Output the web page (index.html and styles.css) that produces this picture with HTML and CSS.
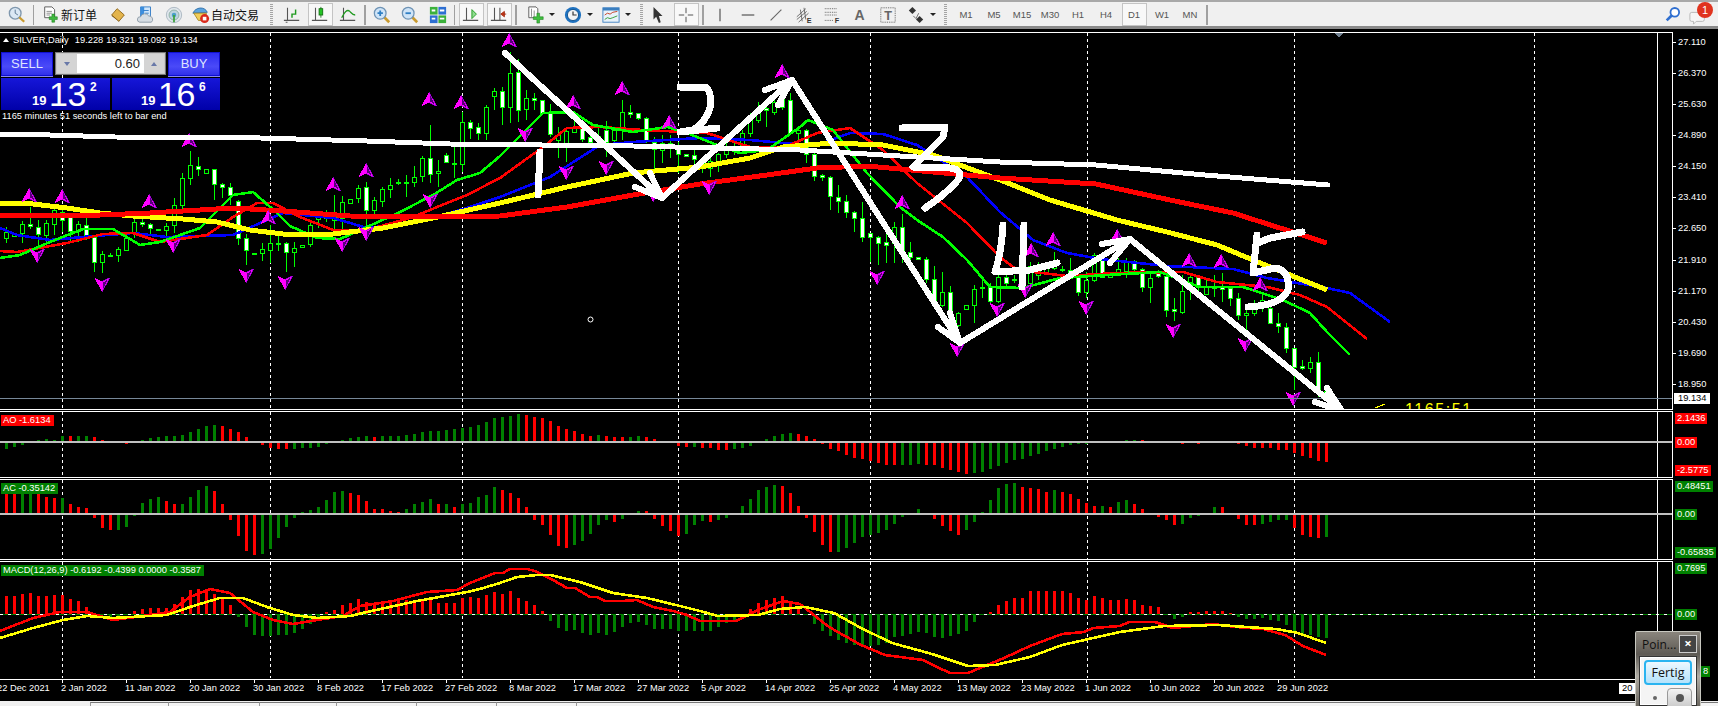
FILE: index.html
```html
<!DOCTYPE html>
<html lang="zh-CN">
<head>
    <meta charset="UTF-8">
    <title>SILVER,Daily</title>
    <link rel="stylesheet" href="styles.css">
</head>
<body>
<div class="terminal">
    <!-- toolbar -->
    <div class="toolbar">
        <div class="group group-a">
            <span class="btn"><svg class="ico" viewBox="0 0 20 20"><circle cx="8" cy="8" r="6.5" fill="#dbe8f4" stroke="#7f97ad" stroke-width="1.5"/><path d="M8 4v4l3 2" fill="none" stroke="#52708c"/><path d="M12.5 12.5l5.5 5" stroke="#c99a2e" stroke-width="2.6"/></svg></span>
            <i class="sep"></i>
            <span class="btn btn-text order"><svg class="ico" viewBox="0 0 20 20"><path d="M3 1h8l3 3v9H3z" fill="#fff" stroke="#555"/><path d="M5 6h6M5 8h6M5 10h4" stroke="#888"/><path d="M11 9h3v3h3v3h-3v3h-3v-3H8v-3h3z" fill="#3fb83f" stroke="#1c7a1c" stroke-width=".6"/></svg>新订单</span>
            <span class="btn"><svg class="ico" viewBox="0 0 20 20"><path d="M9 3l8 7-6 7-8-7z" fill="#e3b44c" stroke="#8d6416"/><path d="M3 10l8 7 1 1-9-7z" fill="#7a5210"/></svg></span>
            <span class="btn"><svg class="ico" viewBox="0 0 20 20"><path d="M4 1h11v11H4z" fill="#cfe6fb" stroke="#2f79c6"/><path d="M4 1h4v11H4z" fill="#3b8ede"/><path d="M7 5h6M9 8h4" stroke="#2f79c6"/><path d="M3 18a3 3 0 0 1 1-6 5 5 0 0 1 9-1 4 4 0 0 1 3 7z" fill="#d6dde3" stroke="#8a98a5"/></svg></span>
            <span class="btn"><svg class="ico" viewBox="0 0 20 20"><circle cx="10" cy="10" r="8.5" fill="#dfe6ec" stroke="#a9b5bf"/><circle cx="10" cy="10" r="5.5" fill="#bcd4e0" stroke="#8fb0a0"/><circle cx="10" cy="10" r="2.5" fill="#4aa0c8"/><path d="M10 10v8" stroke="#3fa33f" stroke-width="2"/></svg></span>
            <span class="btn btn-text auto"><svg class="ico" viewBox="0 0 20 20"><path d="M1 8c3-7 13-8 16-1z" fill="#5ba3de" stroke="#2c6ea8"/><path d="M2 8l14 0-2 8H7z" fill="#f0cd5a" stroke="#a98a24"/><circle cx="14" cy="14" r="5" fill="#d92a1c"/><rect x="12" y="12" width="4" height="4" fill="#fff"/></svg>自动交易</span>
        </div>
        <div class="group group-b">
            <i class="grip"></i>
            <span class="btn"><svg class="ico" viewBox="0 0 20 20"><path class="axis-ln" d="M5 2v14M1 16h17M3 18h2"/><path d="M10 13V9h4V4" fill="none" stroke="#1f9a1f" stroke-width="1.6"/></svg></span>
            <span class="btn on"><svg class="ico" viewBox="0 0 20 20"><path class="axis-ln" d="M5 2v14M1 16h17"/><path d="M11 1v12" stroke="#1f7a1f"/><rect x="9" y="3" width="4" height="7" fill="#25c425" stroke="#117011"/></svg></span>
            <span class="btn"><svg class="ico" viewBox="0 0 20 20"><path class="axis-ln" d="M5 2v14M1 16h17"/><path d="M3 13c3-6 6-10 9-7 2 2 3 4 6 4" fill="none" stroke="#1f9a1f" stroke-width="1.4"/></svg></span>
            <i class="sep sep-tall"></i>
            <span class="btn"><svg class="ico" viewBox="0 0 20 20"><path d="M12 12l6 6" stroke="#c99a2e" stroke-width="3"/><circle cx="8" cy="8" r="6.5" fill="#cfe4f7" stroke="#6e93b5" stroke-width="1.4"/><path d="M5 8h6M8 5v6" stroke="#2e7fc4" stroke-width="2"/></svg></span>
            <span class="btn"><svg class="ico" viewBox="0 0 20 20"><path d="M12 12l6 6" stroke="#c99a2e" stroke-width="3"/><circle cx="8" cy="8" r="6.5" fill="#cfe4f7" stroke="#6e93b5" stroke-width="1.4"/><path d="M5 8h6" stroke="#2e7fc4" stroke-width="2"/></svg></span>
            <span class="btn"><svg class="ico" viewBox="0 0 20 20"><rect x="1" y="1" width="8.5" height="8.5" fill="#3bb13b"/><rect x="10.5" y="1" width="8.5" height="8.5" fill="#2d6fd2"/><rect x="1" y="10.5" width="8.5" height="8.5" fill="#2d6fd2"/><rect x="10.5" y="10.5" width="8.5" height="8.5" fill="#3bb13b"/><path d="M3 5h4M12 5h5M3 14h4M12 14h5" stroke="#fff" stroke-width="2"/></svg></span>
            <i class="sep sep-tall"></i>
            <span class="btn on"><svg class="ico" viewBox="0 0 20 20"><path class="axis-ln" d="M5 2v14M1 16h17"/><path d="M11 4l5 5-5 5z" fill="#8fdc8f" stroke="#1f9a1f"/></svg></span>
            <span class="btn on"><svg class="ico" viewBox="0 0 20 20"><path class="axis-ln" d="M5 2v14M11 2v14M1 16h17"/><path d="M12 9l4-3v6z M14 9h4" fill="#d23a1a" stroke="#a02a10"/></svg></span>
            <i class="sep sep-tall sep-end"></i>
            <span class="btn btn-small"><svg class="ico" viewBox="0 0 20 20"><path d="M2 1h8l2 2v10H2z" fill="#fff" stroke="#555"/><path d="M5 3v9M8 5v7" stroke="#888"/><path d="M11 8h3v4h4v3h-4v4h-3v-4H7v-3h4z" fill="#3fc03f" stroke="#1c7a1c" stroke-width=".6"/></svg></span>
            <i class="drop"></i>
            <span class="btn"><svg class="ico" viewBox="0 0 20 20"><circle cx="10" cy="10" r="9" fill="#1f72c0"/><circle cx="10" cy="10" r="6.2" fill="#f4f4f4" stroke="#0d4f8c"/><path d="M10 6v4h4" fill="none" stroke="#333" stroke-width="1.3"/></svg></span>
            <i class="drop"></i>
            <span class="btn"><svg class="ico" viewBox="0 0 20 20"><rect x="1" y="2" width="18" height="16" fill="#e8f2fb" stroke="#3b7fc0"/><rect x="1" y="2" width="18" height="3" fill="#3b7fc0"/><path d="M3 10l3-2 3 1 3-2 5-1" fill="none" stroke="#c2391c"/><path d="M3 15l3-2 3 1 3-1 5-2" fill="none" stroke="#2f9a2f"/></svg></span>
            <i class="drop"></i>
        </div>
        <div class="group group-c">
            <i class="grip"></i>
            <span class="btn"><svg class="ico" viewBox="0 0 20 20"><path d="M5 1l10 10h-4l2 7-2 1-3-7-3 3z" fill="#333"/></svg></span>
            <span class="btn on"><svg class="ico" viewBox="0 0 20 20"><path d="M10 2v6M10 12v6M2 10h6M12 10h6" stroke="#444"/></svg></span>
            <i class="sep sep-tall"></i>
            <span class="btn"><svg class="ico" viewBox="0 0 20 20"><path d="M10 3v14" stroke="#444" stroke-width="1.2"/></svg></span>
            <span class="btn"><svg class="ico" viewBox="0 0 20 20"><path d="M3 10h14" stroke="#444" stroke-width="1.2"/></svg></span>
            <span class="btn"><svg class="ico" viewBox="0 0 20 20"><path d="M4 16L16 4" stroke="#666" stroke-width="1.2"/></svg></span>
            <span class="btn"><svg class="ico" viewBox="0 0 20 20"><path d="M2 12L12 3M2 15L13 6M4 18L15 8M6 4l2 13M10 2l2 13" stroke="#555" stroke-width=".9"/><text class="ico-letter" x="13" y="19">E</text></svg></span>
            <span class="btn"><svg class="ico" viewBox="0 0 20 20"><path d="M2 3h14M2 7h14M2 10h14M2 16h10" stroke="#555" stroke-dasharray="1 1"/><text class="ico-letter" x="13" y="19">F</text></svg></span>
            <span class="btn btn-glyph">A</span>
            <span class="btn"><svg class="ico" viewBox="0 0 20 20"><rect x="2" y="2" width="16" height="16" fill="none" stroke="#555" stroke-dasharray="1 1"/><text class="ico-t" x="10" y="15">T</text></svg></span>
            <span class="btn"><svg class="ico" viewBox="0 0 20 20"><path d="M6 1l4 4-4 4-4-4z" fill="#333"/><path d="M14 11l4 4-4 4-4-4z" fill="#333"/><path d="M7 11l3 3 3-6" fill="none" stroke="#666"/></svg></span>
            <i class="drop"></i>
        </div>
        <div class="group group-d">
            <i class="grip"></i>
            <span class="period">M1</span>
            <span class="period">M5</span>
            <span class="period">M15</span>
            <span class="period">M30</span>
            <span class="period">H1</span>
            <span class="period">H4</span>
            <span class="period on">D1</span>
            <span class="period">W1</span>
            <span class="period">MN</span>
        </div>
        <div class="group group-e">
            <i class="sep sep-tall"></i>
            <span class="search"><svg class="ico" viewBox="0 0 20 20"><circle cx="12" cy="7" r="4.8" fill="#fff" stroke="#2f6fd0" stroke-width="2"/><path d="M8.5 10.5L3 16" stroke="#2f6fd0" stroke-width="3"/></svg></span>
            <span class="chat">
                <svg class="ico" viewBox="0 0 20 20"><path d="M3 6h12a2 2 0 0 1 2 2v6a2 2 0 0 1-2 2H8l-3 3v-3H3a2 2 0 0 1-2-2V8a2 2 0 0 1 2-2z" fill="#f6f6f6" stroke="#b4b4b4"/></svg>
                <b class="badge">1</b>
            </span>
        </div>
    </div>

    <!-- main chart -->
    <div class="pane pane-main">
        <div class="plot">
            <svg id="main-plot" viewBox="0 33 1672 376"></svg>
            <div class="chart-title"><i class="title-arrow"></i>SILVER,Daily&nbsp; 19.228 19.321 19.092 19.134</div>
            <div class="trade">
                <div class="trade-top">
                    <div class="side-btn">SELL</div>
                    <div class="spinner">
                        <span class="spin"><i class="spin-down"></i></span>
                        <span class="lot">0.60</span>
                        <span class="spin"><i class="spin-up"></i></span>
                    </div>
                    <div class="side-btn">BUY</div>
                </div>
                <div class="trade-prices">
                    <div class="quote"><span class="q-small">19</span><span class="q-big">13</span><sup class="q-sup">2</sup></div>
                    <div class="quote quote-buy"><span class="q-small">19</span><span class="q-big">16</span><sup class="q-sup">6</sup></div>
                </div>
                <div class="countdown">1165 minutes 51 seconds left to bar end</div>
            </div>
        </div>
        <div class="axis price-axis">
            <span>27.110</span><span>26.370</span><span>25.630</span><span>24.890</span>
            <span>24.150</span><span>23.410</span><span>22.650</span><span>21.910</span>
            <span>21.170</span><span>20.430</span><span>19.690</span><span>18.950</span>
            <b class="last-price">19.134</b>
        </div>
    </div>

    <!-- AO -->
    <div class="pane pane-ao">
        <div class="plot">
            <svg id="ao-plot" viewBox="0 412 1672 65"></svg>
            <div class="legend red">AO -1.6134</div>
        </div>
        <div class="axis tags tags-ao">
            <span class="tag red">2.1436</span>
            <span class="tag red">0.00</span>
            <span class="tag red">-2.5775</span>
        </div>
    </div>

    <!-- AC -->
    <div class="pane pane-ac">
        <div class="plot">
            <svg id="ac-plot" viewBox="0 480 1672 79"></svg>
            <div class="legend green">AC -0.35142</div>
        </div>
        <div class="axis tags tags-ac">
            <span class="tag green">0.48451</span>
            <span class="tag green">0.00</span>
            <span class="tag green">-0.65835</span>
        </div>
    </div>

    <!-- MACD -->
    <div class="pane pane-macd">
        <div class="plot">
            <svg id="macd-plot" viewBox="0 562 1672 117"></svg>
            <div class="legend green">MACD(12,26,9) -0.6192 -0.4399 0.0000 -0.3587</div>
        </div>
        <div class="axis tags tags-macd">
            <span class="tag green">0.7695</span>
            <span class="tag green">0.00</span>
            <span class="tag green tag-tail">8</span>
        </div>
    </div>

    <!-- date axis -->
    <div class="dates">
        <span>22 Dec 2021</span><span>2 Jan 2022</span><span>11 Jan 2022</span><span>20 Jan 2022</span>
        <span>30 Jan 2022</span><span>8 Feb 2022</span><span>17 Feb 2022</span><span>27 Feb 2022</span>
        <span>8 Mar 2022</span><span>17 Mar 2022</span><span>27 Mar 2022</span><span>5 Apr 2022</span>
        <span>14 Apr 2022</span><span>25 Apr 2022</span><span>4 May 2022</span><span>13 May 2022</span>
        <span>23 May 2022</span><span>1 Jun 2022</span><span>10 Jun 2022</span><span>20 Jun 2022</span>
        <span>29 Jun 2022</span>
        <b class="cross-date">20</b>
    </div>

    <!-- status bar -->
    <div class="status">
        <i class="cell cell-first"></i><i class="cell cell-a"></i><i class="cell cell-b"></i><i class="cell cell-c"></i><i class="cell cell-d"></i><i class="cell cell-e"></i><i class="cell cell-f"></i><i class="cell cell-rest"></i>
    </div>

    <!-- floating window -->
    <div class="point-win">
        <div class="point-title"><span>Poin...</span><b class="point-close">×</b></div>
        <div class="point-body">
            <div class="fertig">Fertig</div>
            <div class="point-row">
                <i class="dot-small"></i>
                <span class="round-btn"><i class="dot-big"></i></span>
            </div>
        </div>
    </div>
</div>
<script src="chart.js"></script>
</body>
</html>
```

FILE: styles.css
```css
* {
    box-sizing: border-box;
}
html, body {
    margin: 0;
    height: 100%;
    overflow: hidden;
    background: #000;
}
body {
    font-family: "Liberation Sans", Arial, sans-serif;
    font-size: 9.3px;
    color: #fff;
}
i, b {
    font-style: normal;
}
.terminal {
    position: relative;
    width: 1718px;
    height: 706px;
    overflow: hidden;
    background: #000;
}

/* toolbar */
.toolbar {
    display: flex;
    height: 32px;
    background: #f0f0f0;
    border-top: 2px solid #a8a8a8;
    border-bottom: 3px solid #000;
    box-shadow: inset 0 -3px 0 #8a8a8a;
    color: #111;
}
.group {
    display: flex;
    align-items: center;
    height: 25px;
    flex: none;
}
.group-a { width: 266px; padding-left: 3px; }
.group-b { width: 370px; }
.group-c { width: 304px; }
.group-d { width: 264px; }
.group-e { flex: 1; }
.btn {
    display: flex;
    align-items: center;
    justify-content: center;
    width: 28px;
    height: 23px;
    flex: none;
}
.btn.on {
    width: 25px;
    margin: 0 1.5px;
    border: 1px solid #c4c4c4;
    background: #f8f8f8;
}
.btn-small {
    width: 26px;
    margin-left: 2px;
}
.btn-text {
    justify-content: flex-start;
    font-family: "Noto Sans CJK SC", "Liberation Sans", sans-serif;
    font-size: 12px;
    white-space: nowrap;
}
.order {
    width: 67px;
    padding-left: 5px;
}
.auto {
    width: 78px;
    padding-left: 4px;
}
.btn-text .ico {
    margin-right: 1px;
}
.btn-glyph {
    font-size: 14px;
    font-weight: bold;
    color: #666;
}
.ico {
    width: 18px;
    height: 18px;
    flex: none;
}
.axis-ln {
    fill: none;
    stroke: #555;
    stroke-width: 1.2;
}
.ico-letter {
    font: bold 8px "Liberation Sans", sans-serif;
    fill: #333;
}
.ico-t {
    font: bold 14px "Liberation Sans", sans-serif;
    fill: #666;
    text-anchor: middle;
}
.sep {
    width: 1px;
    height: 20px;
    flex: none;
    margin: 0 3px 0 2px;
    background: #a0a0a0;
}
.sep-tall {
    margin: 0 2px;
    width: 1.5px;
}
.sep-end {
    margin-right: 4px;
}
.grip {
    width: 3px;
    height: 22px;
    flex: none;
    margin: 0 5px 0 4px;
    background: repeating-linear-gradient(to bottom, #a4a4a4 0 1px, #f0f0f0 1px 2px);
}
.drop {
    position: relative;
    width: 6px;
    height: 3px;
    flex: none;
    margin-right: 4px;
    border-style: solid;
    border-width: 3px 3px 0;
    border-color: #222 transparent transparent;
}
.group-c .grip {
    margin-right: 1px;
}
.period {
    width: 28px;
    height: 23px;
    flex: none;
    font-size: 9.5px;
    line-height: 23px;
    text-align: center;
    color: #555;
}
.period.on {
    border: 1px solid #c4c4c4;
    background: #f8f8f8;
    line-height: 21px;
    width: 25px;
    margin: 0 1.5px;
}
.search {
    margin-left: auto;
    height: 18px;
}
.chat {
    position: relative;
    width: 18px;
    height: 18px;
    margin: 2px 11px 0 7px;
}
.badge {
    position: absolute;
    left: 8px;
    top: -5px;
    width: 16px;
    height: 16px;
    border-radius: 50%;
    background: #e0331e;
    color: #fff;
    font-size: 11px;
    font-weight: normal;
    line-height: 16px;
    text-align: center;
}

/* panes */
.pane {
    display: flex;
    margin-top: 1px;
}
.pane-main { height: 378px; margin-top: 0; }
.pane-ao { height: 67px; }
.pane-ac { height: 81px; }
.pane-macd { height: 119px; }
.plot {
    position: relative;
    width: 1673px;
    flex: none;
    overflow: hidden;
    border-top: 1px solid #fff;
    border-bottom: 1px solid #fff;
    border-right: 1px solid #fff;
}
.plot svg {
    display: block;
    width: 1672px;
    height: 100%;
    shape-rendering: crispEdges;
}
.axis {
    position: relative;
    flex: 1;
    display: flex;
    flex-direction: column;
    line-height: 11px;
}
.price-axis {
    padding-top: 5px;
}
.price-axis span {
    position: relative;
    height: 33px;
    padding-left: 5px;
}
.price-axis span::before {
    content: "";
    position: absolute;
    left: 0;
    top: 5px;
    width: 3px;
    height: 1px;
    background: #fff;
}
.last-price {
    position: absolute;
    left: 1px;
    top: 361px;
    width: 36px;
    height: 11px;
    padding-left: 4px;
    background: #fff;
    color: #000;
    font-weight: normal;
}

/* overlays on the chart */
.chart-title {
    position: absolute;
    left: 13px;
    top: 2px;
    line-height: 11px;
    word-spacing: .5px;
    white-space: nowrap;
}
.title-arrow {
    position: absolute;
    left: -10px;
    top: 3px;
    border-style: solid;
    border-width: 0 3.5px 4px;
    border-color: transparent transparent #fff;
}
.trade {
    position: absolute;
    left: 1px;
    top: 19px;
    width: 219px;
}
.trade-top {
    display: flex;
    justify-content: space-between;
    height: 25px;
}
.side-btn {
    width: 52px;
    height: 25px;
    padding-bottom: 1px;
    background: linear-gradient(#2a2af0, #4a4af8 60%, #2d2de8);
    border-bottom: 1px solid #8a8af0;
    box-shadow: inset 0 0 0 1px #1010d0;
    color: #dfe4ff;
    font-size: 13px;
    line-height: 24px;
    text-align: center;
}
.spinner {
    display: flex;
    width: 111px;
    height: 23px;
    padding: 1px;
    border: 1px solid #777;
    background: #c8c8c8;
}
.spin {
    display: flex;
    align-items: center;
    justify-content: center;
    width: 20px;
    background: #d4d4d4;
}
.spin-down, .spin-up {
    border-style: solid;
    border-color: transparent;
}
.spin-down {
    border-width: 4px 3px 0;
    border-top-color: #6878a8;
}
.spin-up {
    border-width: 0 3px 4px;
    border-bottom-color: #6878a8;
}
.lot {
    flex: 1;
    padding-right: 4px;
    background: #fff;
    color: #222;
    font-size: 13px;
    line-height: 19px;
    text-align: right;
}
.trade-prices {
    display: flex;
    justify-content: space-between;
    margin-top: 1px;
}
.quote {
    display: flex;
    width: 109px;
    height: 32px;
    padding-left: 31px;
    background: linear-gradient(#1616d8, #0000a8);
    color: #fff;
}
.quote-buy {
    width: 108px;
    padding-left: 29px;
}
.q-small {
    width: 17px;
    padding-top: 16px;
    font-size: 13px;
    font-weight: bold;
    line-height: 13px;
}
.q-big {
    width: 41px;
    font-size: 34px;
    line-height: 32px;
    letter-spacing: -.5px;
}
.q-sup {
    padding-top: 3px;
    font-size: 12px;
    font-weight: bold;
    line-height: 12px;
}
.countdown {
    margin: 1px 0 0 1px;
    line-height: 11px;
    white-space: nowrap;
}
.legend {
    position: absolute;
    left: 1px;
    top: 3px;
    height: 11px;
    padding: 0 3px 0 2px;
    line-height: 11px;
    white-space: nowrap;
}
.red { background: #f00; }
.green { background: #008000; }

/* indicator axis tags */
.tags {
    align-items: flex-start;
    padding: 2px 0 0 2px;
}
.tag {
    height: 11px;
    padding: 0 2px;
}
.tags-ao .tag:nth-child(2) { margin-top: 13px; }
.tags-ao .tag:nth-child(3) { margin-top: 17px; }
.tags-ac .tag:nth-child(2) { margin-top: 17px; }
.tags-ac .tag:nth-child(3) { margin-top: 27px; }
.tags-macd .tag:nth-child(2) { margin-top: 35px; }
.tags-macd .tag:nth-child(3) { margin-top: 46px; }
.tag-tail {
    margin-left: 26px;
}

/* date axis */
.dates {
    position: relative;
    display: flex;
    height: 21px;
    margin-left: -2px;
    white-space: nowrap;
}
.dates span {
    position: relative;
    width: 64px;
    flex: none;
    padding-top: 3px;
    line-height: 11px;
    text-indent: -1px;
}
.dates span::before {
    content: "";
    position: absolute;
    left: 0;
    top: 0;
    width: 1px;
    height: 3px;
    background: #fff;
}
.cross-date {
    position: absolute;
    left: 1621px;
    top: 3px;
    width: 30px;
    height: 11px;
    padding-left: 3px;
    background: #fff;
    color: #000;
    font-weight: normal;
    line-height: 11px;
}

/* status bar */
.status {
    display: flex;
    height: 5px;
    background: #f0f0f0;
    padding-top: 1px;
}
.cell {
    height: 4px;
    background: #f4f4f4;
    border-top: 1px solid #777;
    border-left: 1px solid #999;
}
.cell-first { width: 90px; margin-left: 0; border: 0; background: #f0f0f0; }
.cell-a { width: 78px; }
.cell-b { width: 91px; }
.cell-c { width: 77px; }
.cell-d { width: 80px; }
.cell-e { width: 80px; }
.cell-f { width: 80px; }
.cell-rest { flex: 1; }

/* floating window */
.point-win {
    position: absolute;
    left: 1635px;
    top: 631px;
    width: 66px;
    height: 75px;
    padding: 0 3px;
    background: linear-gradient(#8a857d, #5e5a54 30%, #b0aca4 60%, #6a665f);
    border: 1px solid #c8c8c0;
    border-bottom: 0;
    border-radius: 2px 2px 0 0;
}
.point-title {
    display: flex;
    justify-content: space-between;
    align-items: center;
    height: 24px;
    color: #111;
    font-family: "Open Sans", "Liberation Sans", sans-serif;
    font-size: 12px;
}
.point-title span {
    margin-left: 3px;
}
.point-close {
    width: 18px;
    height: 18px;
    border: 1px solid #ccc;
    background: #444;
    color: #fff;
    font-size: 13px;
    line-height: 15px;
    text-align: center;
}
.point-body {
    height: 50px;
    padding: 3px 4px;
    border: 1px solid #333;
    background: #f4f4f4;
    box-shadow: inset 0 0 0 1px #fff;
}
.fertig {
    height: 25px;
    border: 2px solid #2ab4f0;
    border-radius: 4px;
    background: linear-gradient(#ecf8ff, #b4e2fb);
    color: #111;
    font-family: "Open Sans", "Liberation Sans", sans-serif;
    font-size: 12.5px;
    line-height: 21px;
    text-align: center;
}
.point-row {
    display: flex;
    align-items: center;
    justify-content: space-between;
    height: 20px;
    margin-top: 3px;
    padding-left: 9px;
}
.dot-small {
    width: 4px;
    height: 4px;
    border-radius: 50%;
    background: #666;
}
.round-btn {
    display: flex;
    align-items: center;
    justify-content: center;
    width: 25px;
    height: 21px;
    border: 1px solid #999;
    border-radius: 4px 4px 0 0;
    background: linear-gradient(#f4f4f4, #c8c8c8);
}
.dot-big {
    width: 8px;
    height: 8px;
    border-radius: 50%;
    background: #555;
}
```

FILE: chart.js
```js
// grid and candles, all coordinates are page pixels (viewBox follows the pane)
var gridX = [62, 270, 462, 678, 870, 1087, 1294, 1534];

// bodyTop, bodyBottom, wickTop, wickBottom, white body
var candles = [
    [232,238,227,243,0],[234,236,234,236,0],[224,233,221,243,0],[224,226,207,229,1],[227,234,220,247,1],
    [223,235,220,247,0],[210,224,207,235,0],[212,220,205,232,1],[217,231,213,243,1],[224,231,221,242,0],
    [225,237,217,240,1],[237,262,235,272,1],[254,262,251,273,0],[255,255,253,257,1],[249,255,247,262,0],
    [238,250,235,251,0],[222,233,218,238,0],[222,224,219,227,1],[224,228,223,234,1],[229,230,229,230,1],
    [226,230,223,237,0],[205,225,198,233,0],[178,205,173,210,0],[165,178,151,185,0],[166,169,157,176,1],
    [169,173,169,173,0],[169,184,169,200,1],[184,187,183,198,1],[187,195,183,205,1],[201,238,200,245,1],
    [238,250,234,265,1],[253,254,253,254,1],[249,253,243,261,0],[243,250,225,263,0],[243,244,233,251,0],
    [243,252,242,272,1],[248,252,242,267,0],[245,247,245,247,0],[225,244,223,247,0],[215,219,215,228,0],
    [216,218,210,222,0],[215,220,195,230,0],[202,218,196,230,0],[199,203,199,203,0],[188,198,185,203,0],
    [187,210,182,230,1],[200,210,197,217,0],[189,201,187,207,0],[185,189,178,198,0],[182,182,179,185,1],
    [182,182,175,197,1],[177,182,166,187,0],[158,176,156,182,0],[158,174,125,183,1],[171,173,160,187,0],
    [155,162,153,163,1],[163,163,143,178,1],[122,164,112,172,0],[122,128,120,139,1],[127,133,123,140,1],
    [107,133,105,140,0],[91,96,88,110,0],[91,107,87,125,1],[73,107,52,123,0],[72,110,59,122,1],
    [98,109,90,120,0],[98,100,93,110,1],[100,113,100,115,1],[113,134,104,137,1],[135,140,127,158,0],
    [131,143,130,162,0],[127,132,115,133,0],[127,139,120,142,1],[137,142,130,145,1],[136,141,128,146,1],
    [130,142,121,157,1],[130,140,128,148,0],[112,130,100,140,0],[112,114,105,118,1],[113,118,113,120,1],
    [118,140,117,143,1],[142,149,137,170,1],[143,150,135,163,0],[143,148,135,158,1],[148,154,142,173,1],
    [154,156,154,157,1],[155,159,145,170,1],[160,163,160,173,1],[161,168,158,177,0],[154,163,153,172,0],
    [150,154,143,158,0],[146,150,140,155,0],[133,145,130,150,0],[120,133,113,137,0],[110,120,102,123,0],
    [108,110,102,127,1],[102,112,100,115,0],[98,107,96,110,1],[100,133,93,135,1],[130,133,127,145,0],
    [130,154,129,163,1],[154,176,153,181,1],[175,177,174,181,1],[177,196,176,210,1],[197,201,185,213,1],
    [201,212,195,218,1],[212,218,211,232,1],[218,237,202,242,1],[233,237,233,262,1],[237,243,236,265,1],
    [242,245,233,263,1],[227,243,222,263,0],[227,252,214,263,1],[252,257,242,260,1],[257,259,257,259,1],
    [259,279,257,283,1],[279,300,266,302,1],[292,305,272,307,0],[292,317,286,320,1],[313,325,312,327,0],
    [305,309,305,309,0],[289,305,285,323,0],[287,288,276,298,1],[287,301,283,304,1],[277,301,270,303,0],
    [277,283,268,287,1],[279,279,275,283,1],[268,279,264,283,1],[266,283,262,285,0],[265,275,262,280,0],
    [266,272,262,274,0],[265,268,252,270,0],[269,269,266,272,1],[270,275,258,277,1],[275,292,273,296,1],
    [280,292,272,298,0],[255,280,253,282,0],[260,277,258,278,1],[274,277,272,278,0],[269,274,258,276,0],
    [262,271,258,278,0],[261,269,260,275,1],[269,287,268,292,1],[278,287,272,303,0],[273,276,270,278,1],
    [276,310,275,317,1],[309,311,298,321,1],[291,312,275,314,0],[277,286,275,300,0],[277,287,277,293,1],
    [287,294,280,295,0],[286,288,275,297,1],[286,289,273,302,1],[288,298,287,306,1],[298,315,293,320,1],
    [313,315,307,330,0],[305,313,300,316,0],[300,307,293,312,0],[308,323,307,324,1],[323,326,313,333,1],
    [327,348,323,353,1],[348,367,348,390,1],[366,368,360,370,1],[362,368,357,373,0],[362,390,352,397,1],
    [391,399,389,400,1]
];

var lines = {
    green: "0,258 20,255 50,242 83,229 113,229 140,245 160,242 183,234 200,228 233,195 253,192 277,213 290,226 317,238 340,239 367,227 400,212 433,195 457,180 480,173 500,156 523,133 543,113 573,112 593,125 633,132 667,127 687,133 717,145 740,153 767,150 800,127 808,120 833,130 867,173 900,207 920,222 943,237 967,260 990,287 1023,288 1060,278 1107,275 1160,272 1200,287 1243,287 1283,300 1310,313 1327,332 1350,355",
    red: "0,251 17,252 67,243 103,234 133,233 160,242 207,235 233,217 257,203 273,203 300,217 333,230 367,230 410,218 467,195 500,178 543,147 567,128 600,127 643,130 707,133 750,147 783,148 817,133 850,128 883,150 917,183 967,223 1000,257 1017,270 1067,276 1117,273 1183,272 1217,282 1267,287 1300,295 1327,307 1367,339",
    blue: "0,228 17,235 50,240 83,237 133,233 167,237 233,235 267,220 283,213 333,218 367,228 417,222 467,208 500,197 550,177 600,145 633,142 700,138 750,140 783,143 817,145 850,133 883,134 917,145 967,177 1000,212 1033,240 1067,253 1100,259 1167,266 1233,269 1267,278 1327,288 1350,293 1390,322",
    yellow: "0,203 33,204 67,208 100,213 133,216 183,219 217,222 250,230 283,234 333,234 383,228 433,218 500,203 567,187 633,173 700,167 750,158 783,147 833,143 883,145 933,155 1000,180 1050,200 1117,220 1167,232 1217,245 1253,260 1327,290",
    thickRed: "0,215 100,215 150,213 233,208 283,211 350,216 433,217 500,216 567,207 633,195 700,184 767,175 817,168 867,166 933,172 1000,178 1096,184 1170,200 1233,213 1327,243",
    white: "0,134 50,135 115,137 260,138 367,141 450,144 633,146 800,150 1000,162 1096,165 1205,175 1328,185"
};

// arrows from the fractal indicator: [x, y of the tip]
var upArrows = [[29,188],[62,189],[149,194],[189,133],[268,210],[333,177],[366,163],[429,92],[461,95],[509,33],[573,95],[622,81],[669,115],[782,64],[902,195],[1031,243],[1053,232],[1117,229],[1189,253],[1221,254],[1260,277]];
var downArrows = [[37,263],[102,292],[173,253],[246,283],[285,290],[342,252],[366,241],[430,208],[525,142],[566,180],[606,175],[653,202],[709,195],[877,285],[957,357],[997,317],[1025,298],[1086,315],[1173,338],[1245,352],[1293,406]];

// hand drawn arrows and wave numbers on top of the chart
var marks = [
    "M505 53L662 198", "M635 187L662 198L650 173",
    "M662 198L792 80", "M765 90L792 80L778 105",
    "M792 80L960 343", "M938 327L960 343L950 313",
    "M960 343L1130 239", "M1102 244L1130 239L1110 263",
    "M1130 239L1342 411", "M1315 402L1342 411L1327 388"
];
var digits = [
    "M540 152L538 195",
    "M680 87H705Q712 90 710 108Q706 122 693 130L680 132L717 128",
    "M902 128L945 127L943 137L913 167L950 168Q964 170 958 180Q945 195 925 208",
    "M1003 225Q1002 250 995 272L1030 270L1057 263", "M1024 225L1022 287",
    "M1302 232L1270 238L1258 243M1257 235L1253 273L1275 268Q1290 270 1288 290Q1282 305 1248 307"
];

var aoData = "-8g -6g -4g 0g 1g 2g 1g 5g 5r 5g 5g 4r 1r 0g -1r -3r 0g 1g 3g 4g 5g 5g 6g 9g 12g 15g 16g 15r 12r 9r 4r 0g -4r -7r -8r -8r -8g -7g -7g -6g -3g 0g 1g 3g 4g 5g 4r 5g 5g 5g 6g 7g 9g 10g 10g 11g 12g 13g 14g 16g 19g 23g " +
    "24g 25g 27g 26r 24r 23r 20r 15r 12r 10r 7r 5r 6g 5r 4r 4r 4g 5g 4r 2r 0g -1r -5r -6r -6g " +
    "-7r -7r -9r -9r -8g -7g -5g -1g 2g 5g 7g 8g 7r 5r 2r -3r -8r -10r -14r -17r -18r -20r -22r -24r -24r -24g -24g -23g -24r -24r -27r -29r -31r -33r -32g -31g -28g -25g -22g -19g -18g -15g -13g -10g -8g -6g -4g -3g -3g -2g -2g -1g 0g 1g 1g 1r 0g 0g 0g -2r -3r -2g -3r -2g -2g -1g -2r -3r -5r -7r -7r -7r -9r -9r -12r -15r -17r -20r -21r";
var acData = "25r 25r 25g 25g 25r 16r 15r 15g 9r 6r 5r -5r -15r -17r -17g -14g -3g 10g 14g 16g 12r 9r 9g 16g 23g 27g 22r 9r -7r -23r -38r -42r -41g -36g -25g -14g -5g 1g 3g 6g 13g 21g 22g 20r 18r 12r 4r 4r 2r 1r 4g 9g 11g 14g 9r 9g 6r 9g 10g 16g 18g 26g " +
    "23r 20r 15r 6r -7r -12r -22r -33r -35r -32g -28g -21g -12g -7g -9r -6g -1g 2g 2r -6r -13r -18r -23r -21g -12g " +
    "-8g -9r -7g -5g 0g 7g 14g 23g 26g 28g 27r 20r 7r -5r -19r -32r -39r -39g -35g -30g -24g -22g -20g -17g -11g -4g 0g 4g 0g -6r -13r -18r -22r -17g -9g 1g 13g 25g 29g 30g 26r 25r 24r 21r 23g 21r 19r 14r 10r 7r 7g 6r 11g 13g 9r 4r -1r -4r -7r -12r -11g -5g -3g 0g 6g 6r 0g -6r -12r -12r -11g -9g -7g -7g -15r -22r -24r -25r -24g";
var macdData = "18r 18r 20r 21r 18r 18r 19r 19r 15r 13r 7r 1r 0g -5g -5g 0g 3r 5r 6r 6r 6r 10r 17r 24r 25r 25r 20r 17r 9r -3g -13g -21g -22g -22g -21g -21g -19g -15g -10g -3g 2r 4r 9r 11r 15r 12r 11r 12r 13r 15r 14r 13r 14r 16r 11r 11r 11r 16r 17r 16r 19r 22r " +
    "20r 23r 16r 13r 9r 3r -7g -14g -17g -16g -19g -21g -19g -21g -18g -13g -9g -8g -11g -15g -15g -15g -17g -17g -17g " +
    "-17g -17g -13g -9g -6g 0g 5r 11r 14r 16r 18r 13r 7r 0g -10g -17g -22g -26g -29g -31g -33g -32g -31g -29g -23g -22g -20g -18g -19g -23g -24g -22g -20g -17g -8g -1g 2r 9r 13r 16r 16r 23r 23r 23r 23r 23r 21r 16r 14r 18r 16r 14r 14r 15r 14r 9r 8r 7r 0g -5g -3g 2r 2r 3r 3r 3r 1r -3g -5g -5g -4g -6g -7g -11g -18g -20g -21g -23g -24g";

var macdRed = "0,631 33,618 60,612 87,612 113,620 150,615 170,612 190,597 210,589 230,593 253,612 273,620 293,624 317,620 343,616 360,606 393,601 427,592 457,590 470,583 495,573 503,573 510,569 527,569 535,571 553,580 567,588 575,588 590,597 597,597 605,601 622,601 637,600 653,607 673,611 687,615 700,621 736,621 758,610 783,601 800,604 829,627 861,645 885,655 923,660 937,667 950,673 968,673 1004,658 1030,646 1062,634 1084,632 1093,628 1120,626 1129,622 1155,622 1173,628 1213,624 1236,627 1263,629 1285,635 1303,646 1326,655";
var macdYellow = "0,638 33,628 63,620 87,616 113,618 167,615 190,607 220,598 243,598 267,607 293,615 317,618 350,616 367,612 417,601 467,592 480,589 500,583 517,577 537,575 550,575 580,582 613,593 647,598 680,606 700,611 718,616 758,615 780,609 805,607 834,613 861,628 892,643 932,654 968,666 995,665 1030,657 1062,645 1120,632 1164,626 1218,625 1276,629 1298,633 1326,643";

function polyline(points, color, width) {
    return '<polyline points="' + points + '" fill="none" stroke="' + color + '" stroke-width="' + width + '"/>';
}

function stroke(d, width) {
    return '<path d="' + d + '" fill="none" stroke="#fff" stroke-width="' + width + '" stroke-linecap="round" stroke-linejoin="round"/>';
}

function gridLines(top, bottom) {
    var out = '';
    gridX.forEach(function (x) {
        out += '<line x1="' + (x + 0.5) + '" y1="' + top + '" x2="' + (x + 0.5) + '" y2="' + bottom + '" stroke="#fff" stroke-dasharray="3 3"/>';
    });
    out += '<line x1="1657.5" y1="' + top + '" x2="1657.5" y2="' + bottom + '" stroke="#fff"/>';
    return out;
}

function candleShapes() {
    var out = '';
    candles.forEach(function (c, k) {
        var x = 8 * k + 4;
        out += '<rect x="' + (x + 2) + '" y="' + c[2] + '" width="1" height="' + Math.max(c[3] - c[2], 1) + '" fill="#0f0"/>';
        out += '<rect x="' + (x + 0.5) + '" y="' + (c[0] + 0.5) + '" width="4" height="' + Math.max(c[1] - c[0], 1) + '" fill="' + (c[4] ? '#fff' : '#000') + '" stroke="#0f0"/>';
    });
    return out;
}

function arrowShape(x, y, dir) {
    var all = [x, y, x - 7.5, y + 14 * dir, x, y + 10.5 * dir, x + 7.5, y + 14 * dir].join(' ');
    var wing = [x + 1, y + 3 * dir, x + 6, y + 12.5 * dir, x + 1, y + 9.5 * dir].join(' ');
    var edge = [x, y, x + 7.5, y + 14 * dir, x, y + 10.5 * dir].join(' ');
    return '<polygon points="' + all + '" fill="#f0f"/>' +
        '<polygon points="' + wing + '" fill="#58007a"/>' +
        '<polyline points="' + edge + '" fill="none" stroke="#a000e0" stroke-width=".8"/>';
}

function histogram(data, zeroY) {
    var out = '';
    data.split(' ').forEach(function (token, k) {
        var h = parseInt(token, 10);
        if (!h) return;
        var color = token.charAt(token.length - 1) === 'r' ? '#f00' : '#008000';
        var y = h > 0 ? zeroY - h : zeroY;
        out += '<rect x="' + (8 * k + 5) + '" y="' + y + '" width="3" height="' + Math.abs(h) + '" fill="' + color + '"/>';
    });
    return out;
}

function drawMain() {
    var svg = gridLines(33, 409);
    svg += '<polygon points="1335,33 1343,33 1339,38" fill="#708090"/>';
    svg += candleShapes();
    svg += polyline(lines.blue, '#00f', 2.6);
    svg += polyline(lines.red, '#f00', 2.6);
    svg += polyline(lines.green, '#0f0', 2.6);
    svg += polyline(lines.yellow, '#ff0', 5);
    svg += polyline(lines.thickRed, '#f00', 5);
    upArrows.forEach(function (a) { svg += arrowShape(a[0], a[1], 1); });
    downArrows.forEach(function (a) { svg += arrowShape(a[0], a[1], -1); });
    svg += '<line x1="0" y1="398.5" x2="1672" y2="398.5" stroke="#778899"/>';
    svg += '<line x1="1375" y1="408" x2="1385" y2="404" stroke="#ff0"/>';
    svg += '<text x="1405" y="415" fill="#ff0" font-size="16" letter-spacing="1.6" font-family="Liberation Sans">1165:51</text>';
    svg += stroke(lines.white.replace(/^/, 'M').replace(/ /g, 'L'), 5);
    marks.forEach(function (m) { svg += stroke(m, 6); });
    digits.forEach(function (d) { svg += stroke(d, 7); });
    svg += '<circle cx="590.5" cy="319.5" r="2.5" fill="#000" stroke="#fff" shape-rendering="geometricPrecision"/>';
    document.getElementById('main-plot').innerHTML = svg;
}

function drawIndicator(id, top, bottom, zeroY, data) {
    var svg = gridLines(top, bottom) + histogram(data, zeroY);
    svg += '<rect x="0" y="' + zeroY + '" width="1672" height="2" fill="#c0c0c0"/>';
    document.getElementById(id).innerHTML = svg;
}

function drawMacd() {
    var svg = gridLines(562, 678) + histogram(macdData, 614);
    svg += '<line x1="0" y1="614.5" x2="1672" y2="614.5" stroke="#008000"/>';
    svg += '<line x1="0" y1="614.5" x2="1672" y2="614.5" stroke="#fff" stroke-dasharray="3 5"/>';
    svg += polyline(macdRed, '#f00', 2.6);
    svg += polyline(macdYellow, '#ff0', 2.6);
    document.getElementById('macd-plot').innerHTML = svg;
}

drawMain();
drawIndicator('ao-plot', 412, 477, 441, aoData);
drawIndicator('ac-plot', 480, 559, 513, acData);
drawMacd();
```
